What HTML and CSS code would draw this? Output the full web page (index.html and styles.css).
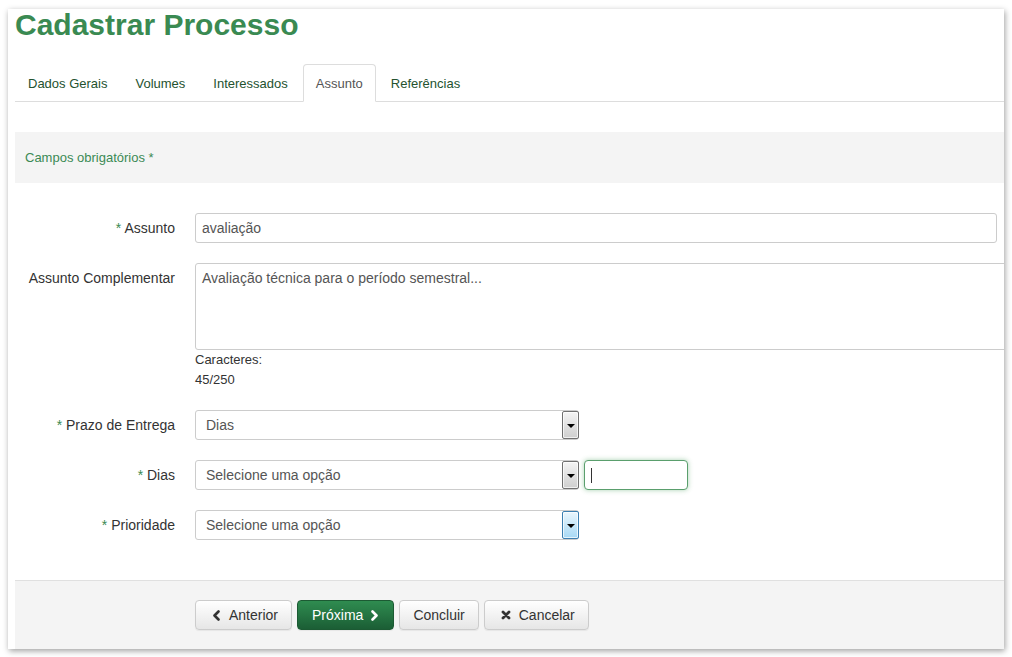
FILE: index.html
```html
<!DOCTYPE html>
<html lang="pt-BR">
<head>
<meta charset="utf-8">
<title>Cadastrar Processo</title>
<link rel="stylesheet" href="styles.css">
</head>
<body>
<div class="panel">
  <h1 class="title">Cadastrar Processo</h1>
  <ul class="tabs">
    <li><a>Dados Gerais</a></li>
    <li><a>Volumes</a></li>
    <li><a>Interessados</a></li>
    <li class="active"><a>Assunto</a></li>
    <li><a>Referências</a></li>
  </ul>
  <div class="notice">Campos obrigatórios *</div>
  <div class="form">
    <div class="row">
      <div class="lbl"><span class="req">*</span> Assunto</div>
      <div class="ctl"><div class="input wide">avaliação</div></div>
    </div>
    <div class="row">
      <div class="lbl">Assunto Complementar</div>
      <div class="ctl col">
        <div class="textarea">Avaliação técnica para o período semestral...</div>
        <div class="help">Caracteres:</div>
        <div class="help">45/250</div>
      </div>
    </div>
    <div class="row">
      <div class="lbl"><span class="req">*</span> Prazo de Entrega</div>
      <div class="ctl">
        <div class="select"><span class="sel-text">Dias</span><span class="sel-btn"><i class="tri"></i></span></div>
      </div>
    </div>
    <div class="row">
      <div class="lbl"><span class="req">*</span> Dias</div>
      <div class="ctl">
        <div class="select"><span class="sel-text">Selecione uma opção</span><span class="sel-btn"><i class="tri"></i></span></div>
        <div class="input small focus"><span class="caret"></span></div>
      </div>
    </div>
    <div class="row">
      <div class="lbl"><span class="req">*</span> Prioridade</div>
      <div class="ctl">
        <div class="select"><span class="sel-text">Selecione uma opção</span><span class="sel-btn hover"><i class="tri"></i></span></div>
      </div>
    </div>
  </div>
  <div class="footer">
    <button class="btn"><svg class="ico before" width="9" height="11" viewBox="0 0 9 11"><path d="M6.5 1.5 L2.5 5.5 L6.5 9.5" fill="none" stroke="currentColor" stroke-width="2.6" stroke-linecap="round" stroke-linejoin="round"/></svg>Anterior</button>
    <button class="btn primary">Próxima<svg class="ico after" width="9" height="11" viewBox="0 0 9 11"><path d="M2.5 1.5 L6.5 5.5 L2.5 9.5" fill="none" stroke="currentColor" stroke-width="2.6" stroke-linecap="round" stroke-linejoin="round"/></svg></button>
    <button class="btn">Concluir</button>
    <button class="btn"><svg class="ico before" width="10" height="10" viewBox="0 0 10 10"><path d="M2 2 L8 8 M8 2 L2 8" fill="none" stroke="currentColor" stroke-width="2.8" stroke-linecap="round"/></svg>Cancelar</button>
  </div>
</div>
</body>
</html>
```

FILE: styles.css
```css
* { box-sizing: border-box; }
html, body { margin: 0; padding: 0; background: #fff; }
body {
  font-family: "Liberation Sans", Arial, sans-serif;
  font-size: 14px;
  color: #333;
  padding: 9px 8px;
}
.panel {
  width: 996px;
  height: 640px;
  background: #fff;
  box-shadow: 1px 2px 6px rgba(0,0,0,0.38);
  overflow: hidden;
  display: flex;
  flex-direction: column;
  padding-left: 7px;
}
.title {
  margin: 0;
  padding-top: 1px;
  font-size: 30px;
  line-height: 30px;
  font-weight: bold;
  color: #3a8a52;
}
.tabs {
  list-style: none;
  margin: 24px 0 0 0;
  padding: 0;
  display: flex;
  border-bottom: 1px solid #ddd;
}
.tabs li { margin-bottom: -1px; margin-right: 2px; }
.tabs a {
  display: block;
  padding: 11px 12px 9px 12px;
  line-height: 16px;
  font-size: 13px;
  color: #24522f;
  border: 1px solid transparent;
  border-radius: 4px 4px 0 0;
}
.tabs li.active a {
  color: #555;
  background: #fff;
  border-color: #ddd #ddd transparent #ddd;
}
.notice {
  margin-top: 30px;
  height: 51px;
  background: #f4f4f4;
  color: #3b8a55;
  font-size: 13px;
  line-height: 51px;
  padding-left: 10px;
}
.form {
  margin-top: 30px;
  display: flex;
  flex-direction: column;
  gap: 20px;
}
.row { display: flex; gap: 20px; align-items: flex-start; }
.lbl {
  width: 160px;
  flex: none;
  text-align: right;
  line-height: 30px;
  color: #333;
}
.req { color: #3a8a52; }
.ctl { display: flex; gap: 5px; align-items: center; }
.ctl.col { flex-direction: column; align-items: flex-start; gap: 0; }
.input {
  height: 30px;
  border: 1px solid #ccc;
  border-radius: 3px;
  padding: 0 6px;
  line-height: 28px;
  color: #555;
  background: #fff;
}
.input.wide { width: 802px; }
.input.small {
  width: 104px;
  height: 30px;
  display: flex;
  align-items: center;
}
.input.focus {
  border-color: #5a9f6d;
  border-radius: 4px;
  box-shadow: 0 0 5px rgba(60, 150, 80, 0.45);
}
.caret {
  display: block;
  width: 1px;
  height: 15px;
  background: #333;
}
.textarea {
  width: 830px;
  height: 87px;
  border: 1px solid #ccc;
  border-radius: 3px;
  padding: 4px 6px;
  line-height: 20px;
  color: #555;
}
.help {
  font-size: 13px;
  line-height: 20px;
  color: #333;
}
.select {
  width: 384px;
  height: 30px;
  border: 1px solid #ccc;
  border-radius: 3px;
  display: flex;
  align-items: center;
  padding: 0 0 0 10px;
  color: #555;
  background: #fff;
}
.sel-text { flex: 1; }
.sel-btn {
  width: 17px;
  height: 28px;
  border: 1px solid #707070;
  border-radius: 2px;
  background: linear-gradient(#f4f4f4, #cfcfcf);
  box-shadow: inset 0 0 0 1px rgba(255,255,255,0.7);
  display: flex;
  align-items: center;
  justify-content: center;
  margin-right: -1px;
}
.sel-btn.hover {
  border-color: #3c7fb1;
  background: linear-gradient(#eaf6fd, #a7d9f5);
}
.tri {
  display: block;
  width: 0;
  height: 0;
  border-left: 4px solid transparent;
  border-right: 4px solid transparent;
  border-top: 4px solid #000;
  margin-top: 1px;
}
.footer {
  margin-top: 40px;
  flex: 1;
  background: #f4f4f4;
  border-top: 1px solid #e0e0e0;
  padding: 19px 0 0 180px;
  display: flex;
  align-items: flex-start;
  gap: 5px;
}
.btn {
  font-family: "Liberation Sans", Arial, sans-serif;
  font-size: 14px;
  line-height: 20px;
  height: 30px;
  padding: 4px 13px;
  border: 1px solid #ccc;
  border-radius: 4px;
  color: #333;
  background: linear-gradient(#fff, #e6e6e6);
  box-shadow: 0 1px 1px rgba(0,0,0,0.06);
  display: flex;
  align-items: center;
  cursor: pointer;
}
.btn.primary {
  color: #fff;
  border-color: #1c5a33;
  background: linear-gradient(#2f8c50, #1b5e35);
  padding: 4px 14px;
}
.ico { flex: none; }
.ico.before { margin-left: 3px; margin-right: 8px; }
.ico.after { margin-left: 7px; }
```
